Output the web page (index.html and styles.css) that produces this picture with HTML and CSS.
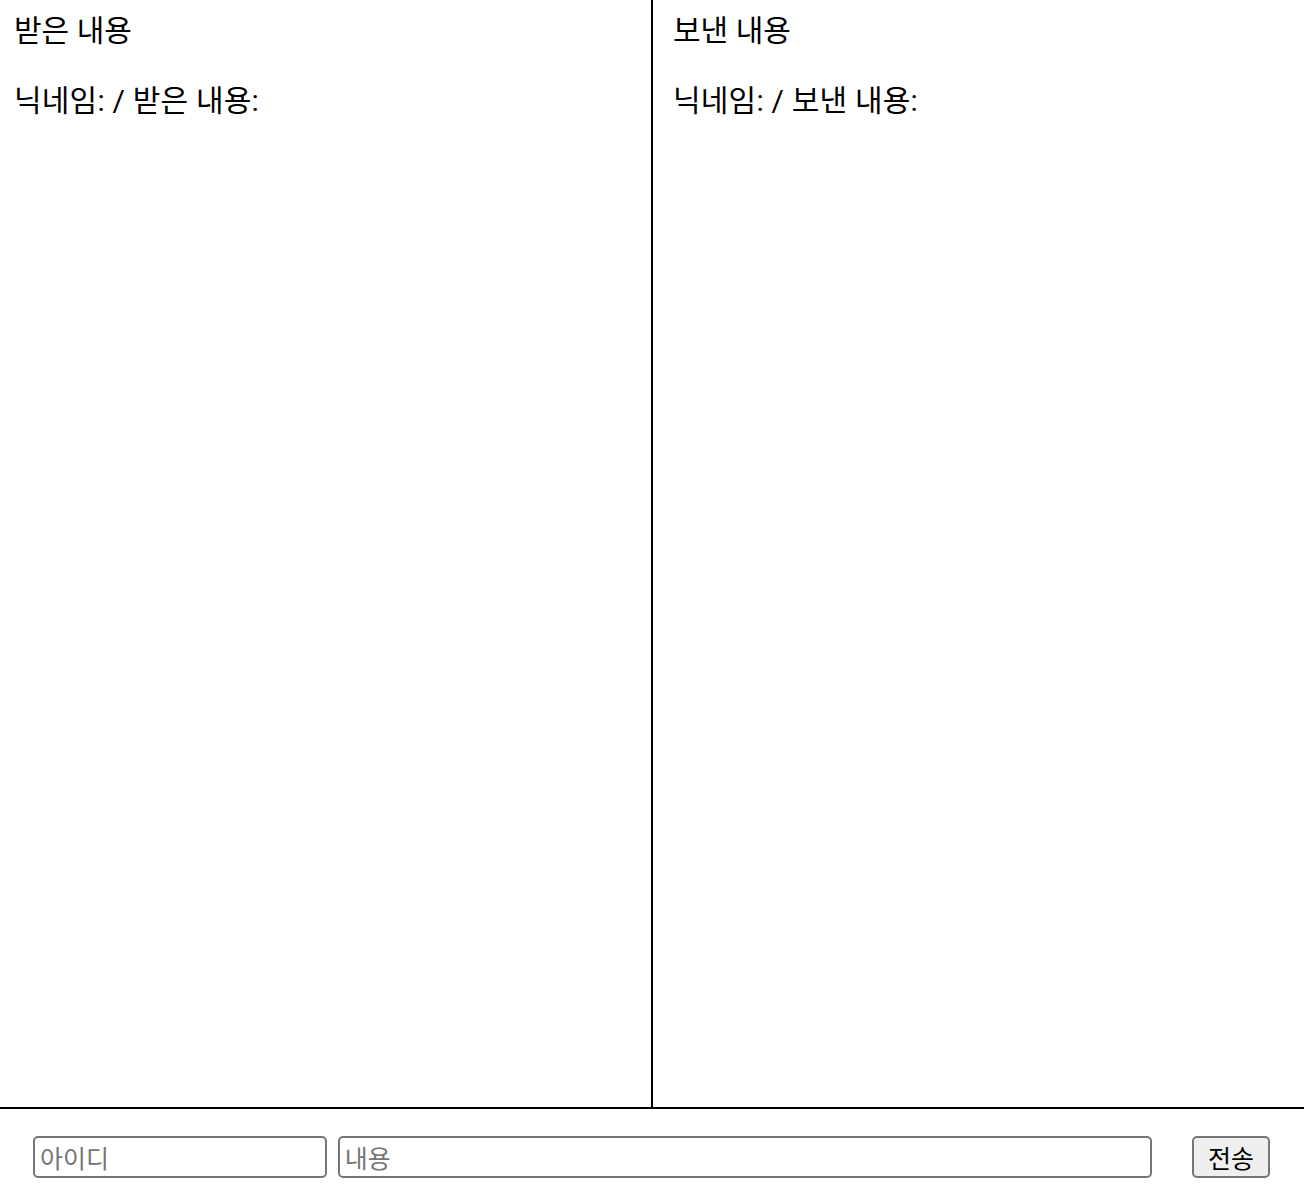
FILE: index.html
```html
<!DOCTYPE html>
<html lang="ko">
<head>
    <meta charset="UTF-8">
    <meta name="viewport" content="width=device-width, initial-scale=1.0">
    <title>채팅</title>
    <link rel="stylesheet" href="styles.css">
</head>
<body>
    <div class="board">
        <div class="panel panel-received">
            <h2 class="panel-title">받은 내용</h2>
            <p class="panel-line">닉네임: / 받은 내용:</p>
        </div>
        <div class="panel panel-sent">
            <h2 class="panel-title">보낸 내용</h2>
            <p class="panel-line">닉네임: / 보낸 내용:</p>
        </div>
    </div>

    <form class="send-bar" onsubmit="return false;">
        <input type="text" class="input-id" placeholder="아이디">
        <input type="text" class="input-msg" placeholder="내용">
        <button type="submit" class="send-btn">전송</button>
    </form>
</body>
</html>
```

FILE: styles.css
```css
body {
    margin: 0;
    padding: 0;
    font-family: Roboto, "Noto Sans CJK KR", sans-serif;
    color: #000;
    background: #fff;
}

.board {
    display: flex;
    height: 1107px;
    border-bottom: 2px solid #000;
}

.panel {
    flex: 0 0 auto;
    box-sizing: border-box;
}

.panel-received {
    width: 653px;
    padding-left: 14px;
    border-right: 2px solid #000;
}

.panel-sent {
    flex: 1;
    padding-left: 20px;
}

.panel-title {
    font-size: 30px;
    font-weight: normal;
    line-height: 40px;
    margin: 11px 0 0 0;
}

.panel-line {
    font-size: 30px;
    line-height: 40px;
    margin: 30px 0 0 0;
    letter-spacing: 0.2px;
}

.send-bar {
    display: flex;
    align-items: center;
    padding: 27px 34px 0 33px;
}

.send-bar input {
    box-sizing: border-box;
    height: 42px;
    font-family: "Noto Sans CJK KR", sans-serif;
    font-size: 25px;
    padding: 0 5px;
    border: 2px solid #767676;
    border-radius: 5px;
}

.send-bar input::placeholder {
    color: #757575;
}

.input-id {
    width: 294px;
}

.input-msg {
    width: 815px;
    margin-left: 11px;
}

.send-btn {
    box-sizing: border-box;
    height: 42px;
    width: 78px;
    margin-left: 40px;
    font-family: "Noto Sans CJK KR", sans-serif;
    font-size: 25px;
    padding: 0;
    background: #efefef;
    border: 2px solid #767676;
    border-radius: 5px;
    color: #000;
}
```
